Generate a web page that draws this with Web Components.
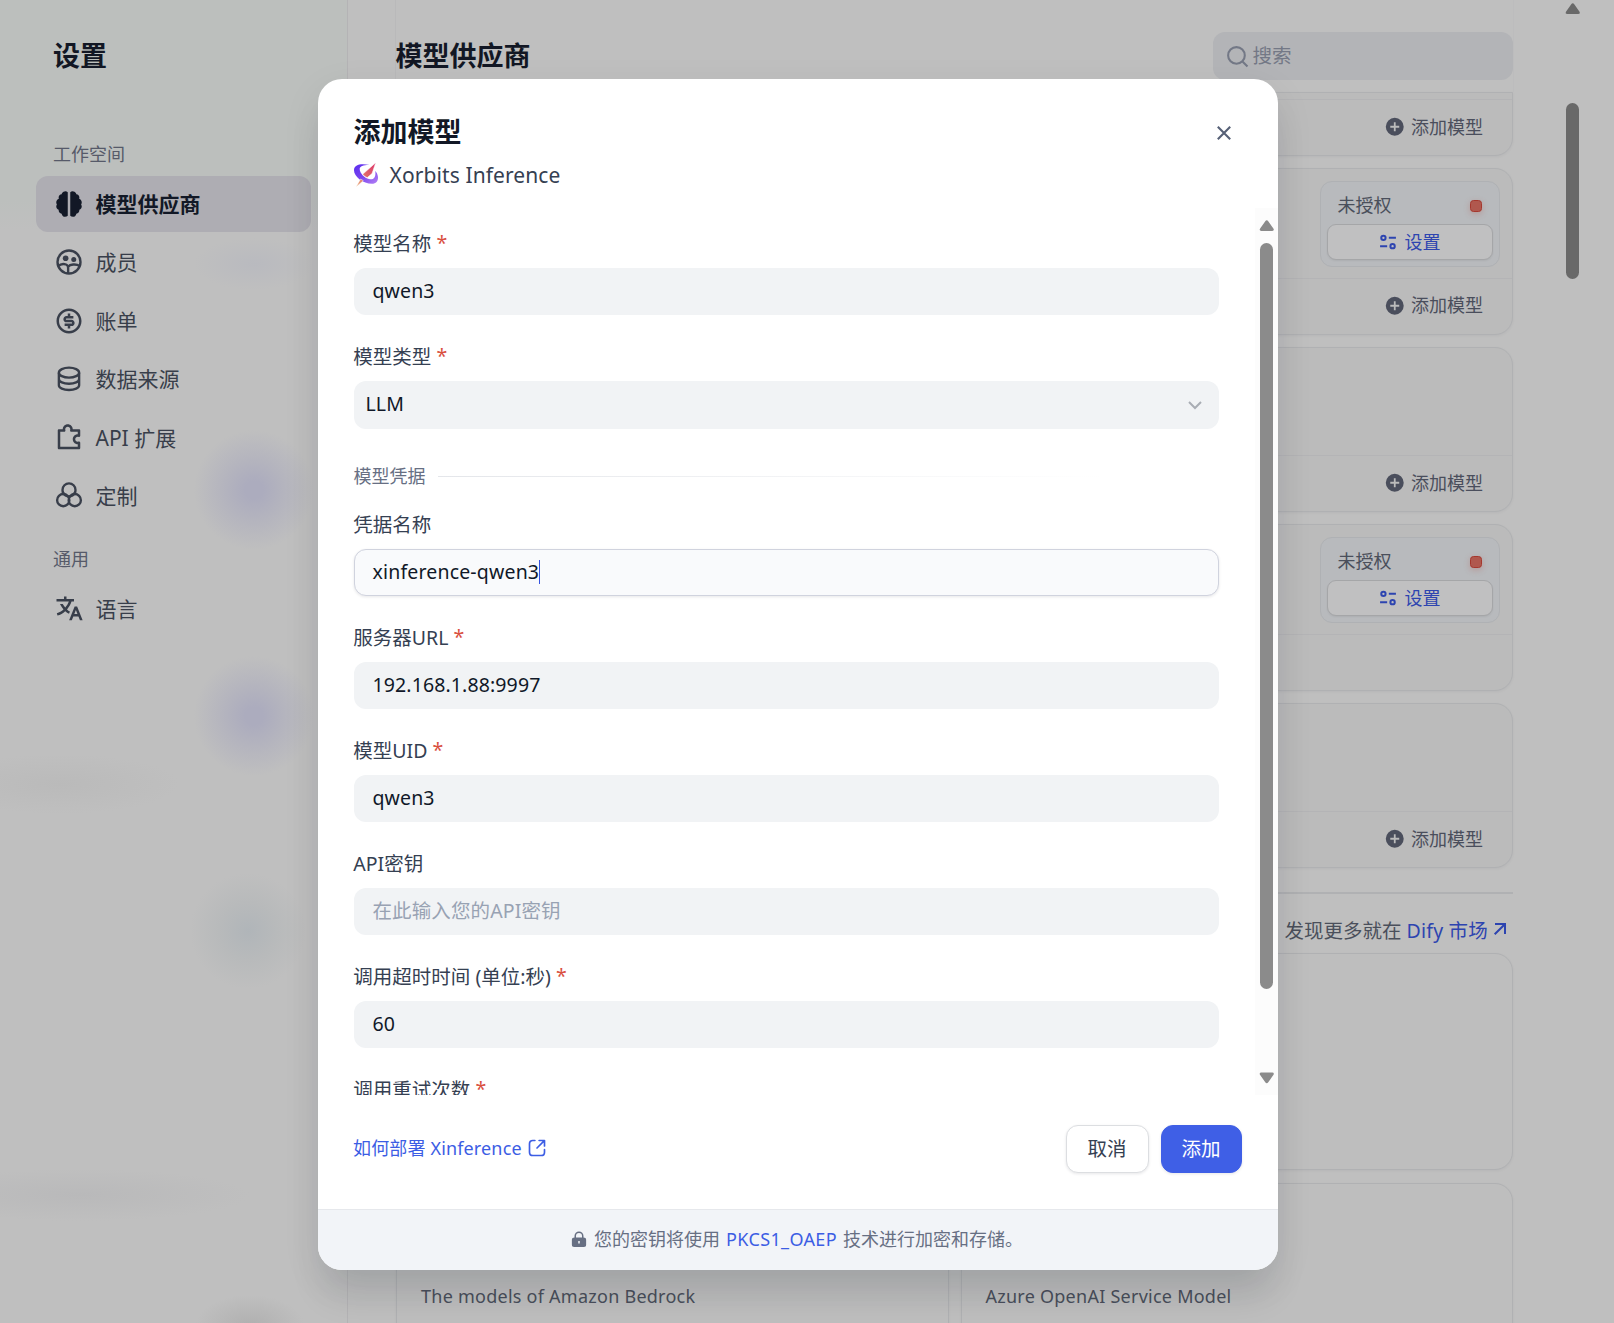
<!DOCTYPE html>
<html lang="zh-CN">
<head>
<meta charset="utf-8">
<title>设置 - 模型供应商</title>
<style>
html,body{margin:0;height:100%;overflow:hidden}
body{background:#bfbfbf;font-family:"Noto Sans","Noto Sans CJK SC",sans-serif;font-size:19.5px;color:#354052}
</style>
</head>
<body>
<settings-app></settings-app>
<script>
const define=(name,html,setup)=>{
  const t=document.createElement('template');t.innerHTML=html;
  customElements.define(name,class extends HTMLElement{
    constructor(){super();this.attachShadow({mode:'open'}).append(t.content.cloneNode(true));}
    connectedCallback(){if(setup)setup(this,this.shadowRoot);}
  });
};

const ICONS={
brain:'<path fill="currentColor" d="M11 2.6C10.4 2 9.400 1.700 8.500 1.900C7.200 2.100 6.300 3 6.100 4.200C4.700 4.300 3.700 5.400 3.700 6.800C3.700 7.200 3.800 7.500 3.900 7.800C2.600 8.300 1.800 9.400 1.800 10.700C1.800 11.300 2 11.800 2.300 12.300C2 12.800 1.800 13.300 1.800 13.900C1.800 15.100 2.600 16.100 3.700 16.500C3.600 18.200 4.700 19.500 6.100 19.700C6.400 21.200 7.400 22.200 8.800 22.200C9.700 22.200 10.500 21.900 11 21.400ZM13 2.600C13.600 2 14.600 1.700 15.500 1.900C16.800 2.100 17.700 3 17.900 4.200C19.300 4.300 20.300 5.400 20.300 6.800C20.300 7.200 20.200 7.500 20.100 7.800C21.400 8.300 22.200 9.400 22.200 10.700C22.200 11.300 22 11.800 21.700 12.300C22 12.800 22.200 13.300 22.200 13.900C22.200 15.100 21.400 16.100 20.300 16.500C20.400 18.200 19.300 19.500 17.900 19.700C17.600 21.200 16.600 22.200 15.200 22.200C14.300 22.200 13.500 21.900 13 21.400Z"/>',
group:'<g fill="none" stroke="currentColor" stroke-width="1.900"><circle cx="12" cy="12" r="9.200"/><path d="M3.400 15.300C5 13.700 7.300 13.200 9.600 14C10.800 14.500 11.300 15.300 11.300 16.600V21M11.300 15.800C12.800 13.900 17.600 13.200 20.500 15.200"/></g><circle cx="9.300" cy="9" r="2.250" fill="currentColor"/><circle cx="15.800" cy="10" r="2" fill="currentColor"/>',
dollar:'<path fill="currentColor" d="M12 22C6.480 22 2 17.520 2 12S6.480 2 12 2S22 6.480 22 12S17.520 22 12 22ZM12 20C16.420 20 20 16.420 20 12S16.420 4 12 4S4 7.580 4 12S7.580 20 12 20ZM8.500 14H14C14.280 14 14.500 13.780 14.500 13.500C14.500 13.220 14.280 13 14 13H10C8.620 13 7.500 11.880 7.500 10.500C7.500 9.120 8.620 8 10 8H11V6H13V8H15.500V10H10C9.720 10 9.500 10.220 9.500 10.500C9.500 10.780 9.720 11 10 11H14C15.380 11 16.500 12.120 16.500 13.500C16.500 14.880 15.380 16 14 16H13V18H11V16H8.500Z"/>',
database:'<g fill="none" stroke="currentColor" stroke-width="1.900"><ellipse cx="12" cy="6.900" rx="8.100" ry="4"/><path d="M3.900 6.900V17C3.900 19.200 7.500 20.800 12 20.800S20.100 19.200 20.100 17V6.900M3.900 12C3.900 14.200 7.500 15.800 12 15.800S20.100 14.200 20.100 12"/></g>',
puzzle:'<path fill="currentColor" d="M7 5C7 2.791 8.791 1 11 1C13.209 1 15 2.791 15 5H20C20.552 5 21 5.448 21 6V10.171C21 10.495 20.842 10.800 20.577 10.987C20.312 11.175 19.973 11.222 19.667 11.114C19.460 11.040 19.236 11 19 11C17.895 11 17 11.895 17 13C17 14.105 17.895 15 19 15C19.236 15 19.460 14.960 19.667 14.887C19.973 14.778 20.312 14.825 20.577 15.013C20.842 15.200 21 15.505 21 15.829V20C21 20.552 20.552 21 20 21H4C3.448 21 3 20.552 3 20V6C3 5.448 3.448 5 4 5H7ZM11 3C9.895 3 9 3.895 9 5C9 5.236 9.040 5.460 9.114 5.667C9.222 5.973 9.175 6.312 8.987 6.577C8.800 6.842 8.495 7 8.171 7H5V19H19V17C16.791 17 15 15.209 15 13C15 10.791 16.791 9 19 9V7H13.829C13.505 7 13.200 6.842 13.013 6.577C12.825 6.312 12.778 5.973 12.887 5.667C12.960 5.460 13 5.236 13 5C13 3.895 12.105 3 11 3Z"/>',
rings:'<g fill="none" stroke="currentColor" stroke-width="1.900"><path d="M7.500 9.800C7 8.900 6.800 8 6.800 7.100A5.200 5.200 0 0 1 17.200 7.100C17.200 8 17 8.900 16.500 9.800"/><circle cx="7.400" cy="15.300" r="4.900"/><circle cx="16.600" cy="15.300" r="4.900"/><path d="M6.900 8.500C7.900 11.400 10.500 12.500 12 12.300C13.500 12.500 16.100 11.400 17.100 8.500"/></g>',
translate:'<path fill="currentColor" d="M18.500 10L22.900 21H20.745L19.544 18H15.454L14.255 21H12.101L16.500 10ZM10 2V4H16V6L14.032 6C13.243 8.366 11.999 10.506 10.412 12.301C11.134 12.946 11.917 13.518 12.748 14.008L11.997 15.886C10.924 15.278 9.919 14.552 9 13.725C7.214 15.332 5.109 16.555 2.799 17.273L2.263 15.344C4.239 14.720 6.045 13.674 7.590 12.302C6.463 11.028 5.509 9.580 4.767 8H7.007C7.570 9.039 8.240 10.003 9 10.877C10.228 9.465 11.221 7.816 11.910 6L2 6V4H8V2ZM17.500 12.885L16.253 16H18.745Z"/>',
search:'<path fill="none" stroke="currentColor" stroke-width="2" d="M17 17L21.600 21.600M19 11A8 8 0 1 1 3 11A8 8 0 0 1 19 11Z"/>',
plus:'<path fill="currentColor" d="M12 2A10 10 0 1 0 12 22A10 10 0 0 0 12 2ZM11 7H13V11H17V13H13V17H11V13H7V11H11Z"/>',
sliders:'<g fill="none" stroke="currentColor" stroke-width="2.400"><circle cx="6.500" cy="7" r="2.600"/><path d="M13 7H21.500M2.500 17H11"/><circle cx="17.500" cy="17" r="2.600"/></g>',
arrow:'<path fill="currentColor" d="M16 9.414L7.397 18.021L5.983 16.607L14.590 8H7V6H18V17H16Z"/>',
close:'<path fill="none" stroke="currentColor" stroke-width="2.100" d="M5.800 5.800L18.200 18.200M18.200 5.800L5.800 18.200"/>',
chevron:'<path fill="none" stroke="currentColor" stroke-width="2.600" d="M4 8L12 16L20 8"/>',
external:'<path fill="none" stroke="currentColor" stroke-width="2" stroke-linecap="round" stroke-linejoin="round" d="M9.500 3H7C4.500 3 3 4.500 3 7V17C3 19.500 4.500 21 7 21H17C19.500 21 21 19.500 21 17V14M14.500 3H21V9.500M20.500 3.500L12 12"/>',
lock:'<path fill="currentColor" fill-rule="evenodd" d="M6 10V8A6 6 0 0 1 18 8V10C20.200 10 21.500 11 21.500 13V19.500C21.500 21.500 20.500 22.500 18.500 22.500H5.500C3.500 22.500 2.500 21.500 2.500 19.500V13C2.500 11 3.800 10 6 10ZM8 10H16V8A4 4 0 0 0 8 8ZM11 14.500V18H13V14.500Z"/>',
up:'<path fill="currentColor" d="M12 3.500Q13.300 3.500 14.300 5L22.500 16.500Q24 19.800 20.500 20H3.500Q0 19.800 1.500 16.500L9.700 5Q10.700 3.500 12 3.500Z"/>',
xorbits:'<defs><linearGradient id="o" x1="0" y1="0" x2="1" y2="1"><stop offset="0" stop-color="#5a2df0"/><stop offset=".5" stop-color="#7a45ee"/><stop offset="1" stop-color="#b583f5"/></linearGradient><linearGradient id="n" x1="1" y1="0" x2="0" y2="1"><stop offset="0" stop-color="#dc2f68"/><stop offset="1" stop-color="#e6a46c"/></linearGradient></defs><path fill="url(#o)" d="M15.500 2C7 .200 0 1.500 0 7.200C0 13.500 9 20.800 18 20.800C22 20.800 24.300 18 24 14C23.700 11.300 22.700 9.500 21.300 8C22 13 20.500 16.800 16 16.300C10.800 15.700 5.600 10 5.700 6C5.800 3.200 9.500 1.900 15.500 2Z"/><path fill="url(#n)" stroke="#fff" stroke-width=".5" d="M21.700 -.300L18 10.500L13.300 14.600C11.500 14 9.700 12.700 8.700 11.300ZM6.600 16L9.300 17.700L2 24Z"/>'
};
define('ui-icon','<style>:host{display:block;flex:none;line-height:0}svg{display:block;width:100%;height:100%;overflow:visible}</style><svg viewBox="0 0 24 24"></svg>',
 (h,r)=>{r.querySelector('svg').innerHTML=ICONS[h.getAttribute('name')]||'';const s=h.getAttribute('size');h.style.width=h.style.height=s+'px';});

define('nav-item',`<style>
:host{display:flex;align-items:center;box-sizing:border-box;height:55.500px;width:275px;padding-left:17.500px;gap:12px;border-radius:12px;font-size:21px;line-height:30px;color:#383e4a}
:host([active]){background:#aeadb3;color:#121826;font-weight:700}
</style><span class="icon"></span><span><slot></slot></span>`,
 (h,r)=>{r.querySelector('.icon').innerHTML=`<ui-icon size="30" name="${h.getAttribute('icon')}"></ui-icon>`;});

define('side-nav',`<style>
:host{display:flex;flex-direction:column;box-sizing:border-box;width:348px;flex:none;padding:36px 36px 0;border-right:1px solid #b4b3b5;
background:radial-gradient(circle 60px at 254px 490px,#acacbe 15%,#b4b4be 50%,#bebebf00),radial-gradient(circle 60px at 254px 716px,#acacbe 15%,#b4b4be 50%,#bebebf00),radial-gradient(circle 58px at 248px 931px,#b0b5b9,#b8babb 50%,#bebebf00),radial-gradient(ellipse 60px 26px at 254px 264px,#b9babf,#b9babf00),radial-gradient(ellipse 120px 30px at 60px 784px,#bababa,#bababa00),radial-gradient(ellipse 170px 26px at 80px 1195px,#b9b9ba,#b9b9ba00),radial-gradient(ellipse 54px 30px at 250px 1325px,#b0b0b0,#b0b0b000),linear-gradient(#bcbfbd 0,#bcbfbd 200px,#bfbfbf 230px)}
h1{margin:0 0 65px 17px;font-size:27px;line-height:40px;font-weight:700;color:#121724}
.sec{padding-left:17px;font-size:18px;line-height:27px;color:#565a69}
nav{display:flex;flex-direction:column;gap:3px;margin-top:8px}
nav+.sec{margin-top:22px}
</style><h1>设置</h1><div class="sec">工作空间</div>
<nav><nav-item icon="brain" active>模型供应商</nav-item><nav-item icon="group">成员</nav-item><nav-item icon="dollar">账单</nav-item><nav-item icon="database">数据来源</nav-item><nav-item icon="puzzle">API 扩展</nav-item><nav-item icon="rings">定制</nav-item></nav>
<div class="sec">通用</div><nav><nav-item icon="translate">语言</nav-item></nav>`);

define('credential-panel',`<style>
:host{display:flex;flex-direction:column;box-sizing:border-box;width:180px;height:86px;padding:8px 6px 6px;border:1px solid #afb1b4;border-radius:12px;background:#b8babd}
.top{display:flex;justify-content:space-between;align-items:center;padding:0 11px 0 10.500px;height:31px;margin-bottom:3px;font-size:18px;line-height:27px;color:#4a4f5b}
i{width:10px;height:10px;border:1px solid #a5382e;border-radius:3.500px;background:#b0584e;box-shadow:0 2px 6px #b0584e55}
.btn{display:flex;align-items:center;justify-content:center;gap:7px;box-sizing:border-box;height:36px;padding:0 2px 1px 0;border:1px solid #a5a6a8;border-radius:9px;background:#c0c0c1;box-shadow:0 1px 2px #0001;color:#2d44b0;font-size:18px;line-height:24px}
</style><div class="top"><span>未授权</span><i></i></div><div class="btn"><ui-icon name="sliders" size="20"></ui-icon><span>设置</span></div>`);

define('provider-card',`<style>
:host{display:flex;flex-direction:column;box-sizing:border-box;border:1px solid #b0b1b3;border-radius:18px;background:#bbb;box-shadow:0 1px 3px #1018280c;flex:none}
.body{flex:1;display:flex;justify-content:flex-end;align-items:flex-start;padding:12px 12px 0}
.foot{display:flex;align-items:center;justify-content:flex-end;gap:6px;box-sizing:border-box;height:56px;padding:0 29px 1px 0;border-top:1px solid #b4b4b6;font-size:18px;line-height:27px;color:#4a4e5c}
:host([bare]) .foot>*{display:none}
:host([clipped]){border-radius:0 0 18px 18px}
:host([clipped]) .body{padding:0}
</style><div class="body"><slot></slot></div><div class="foot"><ui-icon name="plus" size="21.500"></ui-icon><span>添加模型</span></div>`);

define('market-card',`<style>
:host{display:flex;flex-direction:column;box-sizing:border-box;border:1px solid #b0b1b3;border-radius:18px;background:#bebebe;box-shadow:0 1px 3px #1018280c;padding:99px 24px 0;font-size:18px;line-height:27px;letter-spacing:.25px;color:#4a4f5b}
</style><slot></slot>`);

define('main-panel',`<style>
:host{display:flex;flex-direction:column;width:1117px;flex:none;margin-left:48px}
header{display:flex;flex:none;justify-content:space-between;align-items:flex-start;height:92px;box-sizing:border-box;padding-top:32px;border-left:1px solid #b9b9ba;margin:0 -1px;border-right:1px solid #bcbcbd}
h2{margin:4px 0 0 -.5px;font-size:27px;line-height:40px;font-weight:700;color:#121724}
.search{display:flex;align-items:center;box-sizing:border-box;width:300px;height:48px;border-radius:12px;background:#b3b4b7;padding-left:11.500px;gap:3px;font-size:19.500px;line-height:28px;color:#737886}
.list{display:flex;flex:none;flex-direction:column;gap:12.300px}
hr{width:100%;margin:12px 0 0;border:0;height:2px;background:#b0b1b3;flex:none}
.more{display:flex;flex:none;justify-content:flex-end;align-items:center;height:36px;margin:17px 1px 6px 0;font-size:19.500px;color:#4a4f5b;white-space:pre}
.more b{font-weight:400;color:#2d44b0;letter-spacing:.2px}.more ui-icon{color:#2d44b0}
.grid{display:grid;flex:none;grid-template-columns:1fr 1fr;column-gap:12px;row-gap:13px;grid-auto-rows:217px}
</style>
<header><h2>模型供应商</h2><div class="search"><ui-icon name="search" size="25"></ui-icon><span>搜索</span></div></header>
<div class="list">
<provider-card clipped style="height:64px"></provider-card>
<provider-card style="height:166.500px"><credential-panel></credential-panel></provider-card>
<provider-card style="height:165px"></provider-card>
<provider-card bare style="height:166.500px"><credential-panel></credential-panel></provider-card>
<provider-card style="height:165px"></provider-card>
<hr></div>
<div class="more"><span>发现更多就在 </span><b>Dify 市场</b><ui-icon name="arrow" size="24"></ui-icon></div>
<div class="grid"><market-card></market-card><market-card></market-card><market-card>The models of Amazon Bedrock</market-card><market-card>Azure OpenAI Service Model</market-card></div>`);

define('scroll-rail',`<style>
:host{display:flex;flex-direction:column;align-items:center;box-sizing:border-box;width:23px;color:var(--rail,#8b8b8b)}
.thumb{width:13px;border-radius:6.500px;background:currentColor}
.down{transform:rotate(180deg);margin-top:auto}
:host([one]) .down{display:none}
</style><ui-icon name="up" size="15.500"></ui-icon><div class="thumb"></div><ui-icon class="down" name="up" size="15.500"></ui-icon>`,
 (h,r)=>{const t=r.querySelector('.thumb');t.style.height=h.getAttribute('thumb')+'px';t.style.marginTop=h.getAttribute('offset')+'px';});

define('form-field',`<style>
:host{display:flex;flex-direction:column;flex:none;margin-bottom:27px}
label{display:flex;font-size:19.500px;line-height:30px;margin:0 0 9px -.7px;color:#354052;white-space:pre}
label em{font-style:normal;color:#d9503f;margin-top:-1px}
.box{display:flex;align-items:center;box-sizing:border-box;height:47px;border:1px solid transparent;border-radius:12px;background:#f1f3f5;padding:0 18px 2px 17.500px;line-height:27px;letter-spacing:.12px;color:#101828}
:host([hint]) .box{color:#98a2b3}
:host([select]) .box{height:48px;padding:0 14px 3px 10.500px;justify-content:space-between}
:host([focus]) .box{background:#f9fafc;border-color:#d0d3de;box-shadow:0 1px 3px #1018281a;letter-spacing:.17px}
.box i{width:1px;height:24px;background:#3553e0}
ui-icon{color:#a9adb4;margin-top:2px}
</style><label></label><div class="box"><span><slot></slot></span></div>`,
 (h,r)=>{const l=r.querySelector('label');l.innerHTML='<span></span>';l.firstChild.textContent=h.getAttribute('label');
  if(h.hasAttribute('required')){const e=document.createElement('em');e.textContent=' *';l.append(e);}
  const b=r.querySelector('.box');
  if(h.hasAttribute('focus'))b.append(document.createElement('i'));
  if(h.hasAttribute('select'))b.insertAdjacentHTML('beforeend','<ui-icon name="chevron" size="18"></ui-icon>');});

define('ui-button',`<style>
:host{display:flex;align-items:center;justify-content:center;box-sizing:border-box;height:48px;width:83px;border:1px solid #dcdee1;border-radius:12px;background:#fff;box-shadow:0 1px 3px #1018281a;font-size:19.500px;line-height:27px;padding:0 1px 1px 0;color:#354052}
:host([primary]){width:81px;border-color:#3f5fe6;background:#3f5fe6;color:#fff}
</style><slot></slot>`);

define('model-dialog',`<style>
:host{display:flex;flex-direction:column;box-sizing:border-box;width:960px;height:1191px;border-radius:24px;overflow:hidden;background:#fff;box-shadow:0 30px 36px -6px #1018281c,0 12px 40px #10182812}
header{display:flex;justify-content:space-between;height:129px;box-sizing:border-box;padding:33px 42px 0 36px}
h3{margin:0 0 0 -.5px;font-size:27px;line-height:40px;color:#121826}
.prov{display:flex;align-items:center;gap:11.500px;margin-top:8px;font-size:21px;line-height:30px;letter-spacing:.1px}
header>ui-icon{margin-top:9px;color:#566076}
.scroll{display:flex;height:887px;overflow:hidden}
.form{flex:1;display:flex;flex-direction:column;padding:21px 36px 0;overflow:hidden}
scroll-rail{background:#fcfcfc;padding:10px 0 10px}
.div{display:flex;flex:none;align-items:center;gap:12px;height:27px;margin:7px 0 20px -.5px;font-size:18px;line-height:27px;color:#676f83}
.div i{flex:1;height:1px;background:linear-gradient(90deg,#e4e6ea,#fff 85%)}
.act{display:flex;align-items:center;height:114px;box-sizing:border-box;padding:0 36px 6px;gap:12px}
.link{display:flex;align-items:center;gap:5px;margin:0 auto 2px -1px;font-size:18px;line-height:27px;letter-spacing:.15px;color:#3c5de4}
footer{display:flex;flex:1;align-items:center;justify-content:center;border-top:1px solid #e6e8ec;background:#f2f4f8;font-size:18px;line-height:27px;color:#676f83;white-space:pre;padding:0 3px 2px 0}
footer ui-icon{margin-right:6px}
footer b{font-weight:400;color:#3c5de4;letter-spacing:.35px;padding:0 1.500px}
</style>
<header><div><h3>添加模型</h3><div class="prov"><ui-icon name="xorbits" size="24"></ui-icon><span>Xorbits Inference</span></div></div><ui-icon name="close" size="24"></ui-icon></header>
<div class="scroll"><div class="form">
<form-field label="模型名称" required>qwen3</form-field>
<form-field label="模型类型" required select>LLM</form-field>
<div class="div"><span>模型凭据</span><i></i></div>
<form-field label="凭据名称" focus>xinference-qwen3</form-field>
<form-field label="服务器URL" required>192.168.1.88:9997</form-field>
<form-field label="模型UID" required>qwen3</form-field>
<form-field label="API密钥" hint>在此输入您的API密钥</form-field>
<form-field label="调用超时时间 (单位:秒)" required>60</form-field>
<form-field label="调用重试次数" required></form-field>
</div><scroll-rail thumb="746" offset="9.500"></scroll-rail></div>
<div class="act"><div class="link"><span>如何部署 Xinference</span><ui-icon name="external" size="20"></ui-icon></div><ui-button>取消</ui-button><ui-button primary>添加</ui-button></div>
<footer><ui-icon name="lock" size="18"></ui-icon><span>您的密钥将使用 </span><b>PKCS1_OAEP</b><span> 技术进行加密和存储。</span></footer>`);

define('settings-app',`<style>
:host{display:block;position:relative;width:1614px;height:1323px;overflow:hidden}
.page{display:flex;height:100%;overflow:hidden}
scroll-rail{--rail:#696969;margin-left:48px;padding-top:1px}
.overlay{position:absolute;inset:0;display:flex;justify-content:center;align-items:flex-start;padding:79px 18px 0 0}
</style><div class="page"><side-nav></side-nav><main-panel></main-panel><scroll-rail one thumb="176" offset="86.500"></scroll-rail></div>
<div class="overlay"><model-dialog></model-dialog></div>`);
</script>
</body>
</html>
